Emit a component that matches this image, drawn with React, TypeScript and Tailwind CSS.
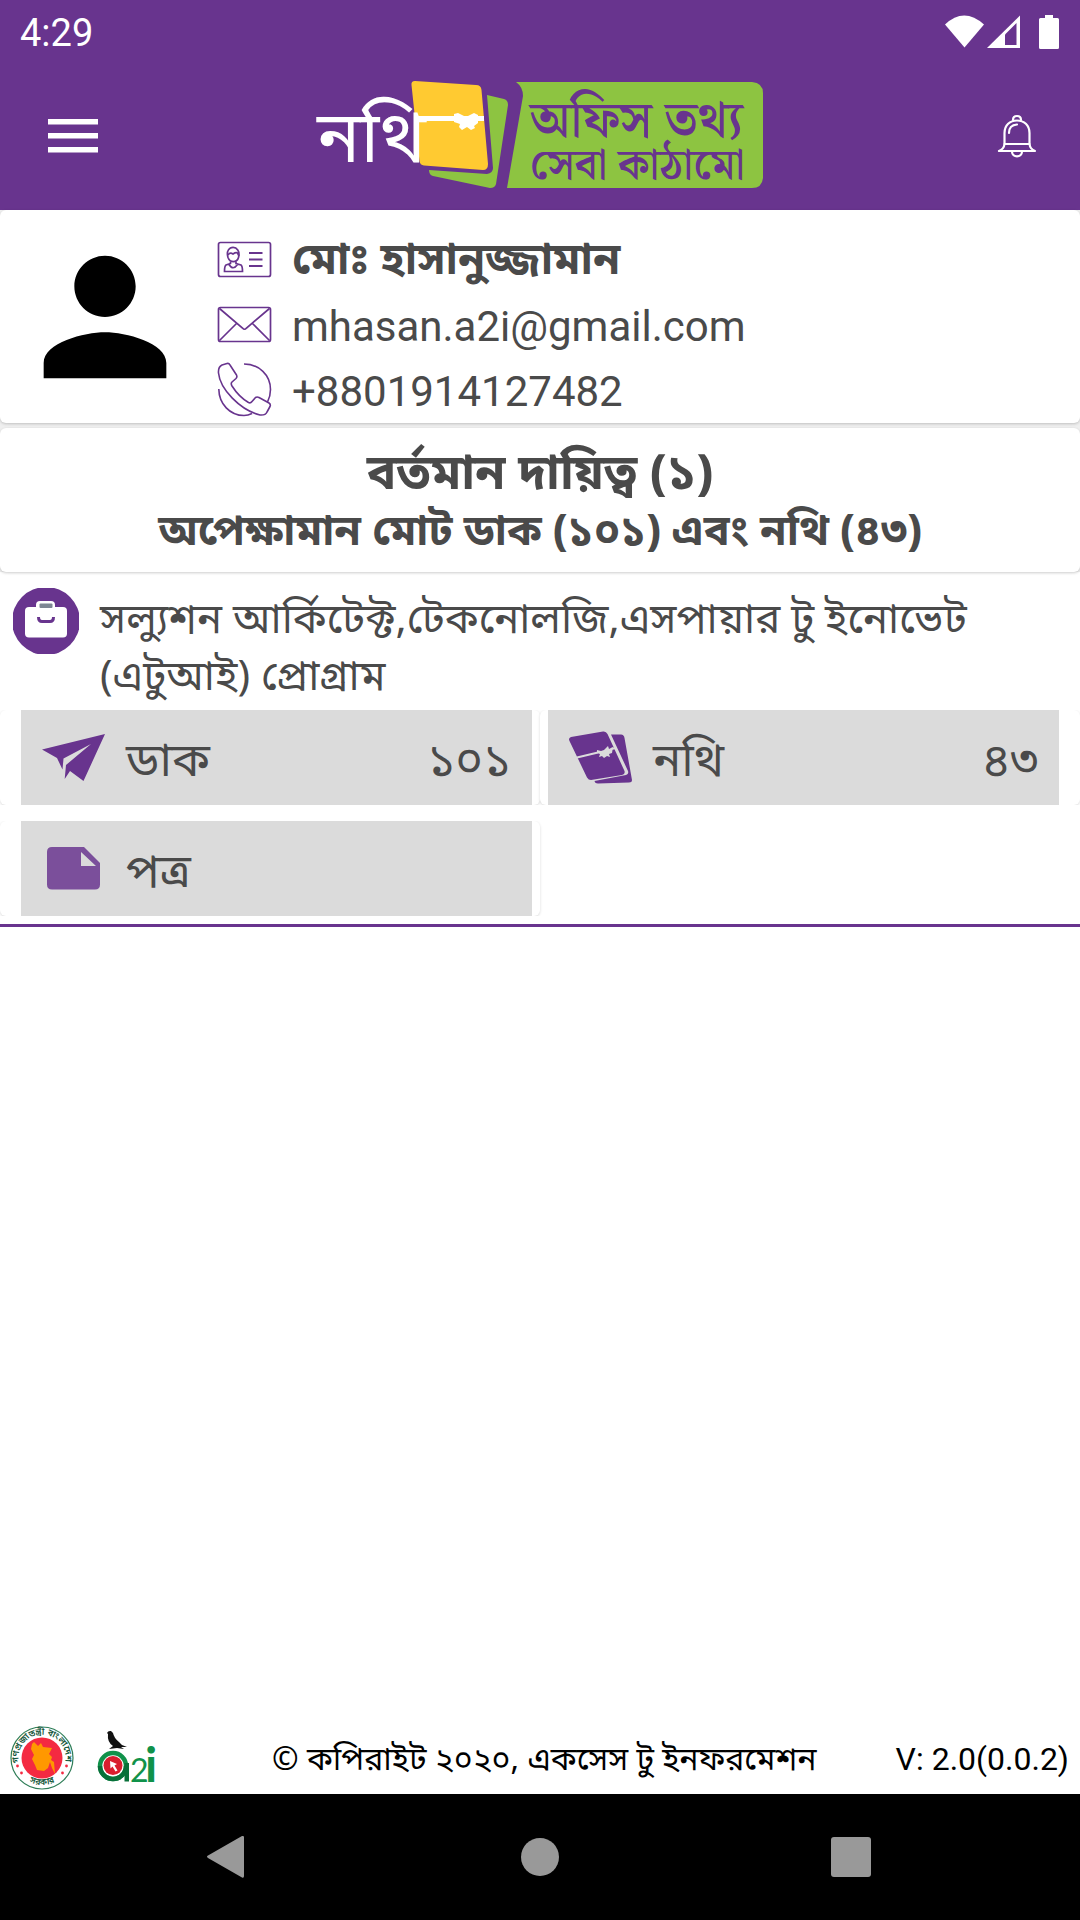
import type { ReactNode } from 'react'

function StatusBar() {
  return (
    <div className="flex h-16 items-center justify-between px-5 text-white">
      <span className="pt-[2px] font-['Roboto'] text-[38px] leading-[42px]">4:29</span>
      <svg viewBox="945 12 115 38" className="h-[38px] w-[115px]" fill="#fff" aria-hidden="true">
        <path d="M945 23.500Q964 5.500 984 23.500L964.500 46.500Z" />
        <path d="M987 47L1020 14.500V47Z" />
        <path d="M1005 33.500L1016.500 22V44H1005Z" fill="#68348e" />
        <path d="M1045 14h8v3h4.500q1.500 0 1.500 1.500v28q0 1.500-1.500 1.500h-17q-1.500 0-1.500-1.500v-28q0-1.500 1.500-1.500h4.500z" />
      </svg>
    </div>
  )
}

function NothiLogo() {
  return (
    <svg viewBox="317 81 446 108" className="h-[108px] w-[446px] overflow-visible" role="img" aria-label="নথি">
      <path d="M487 95L504 99Q508 100 508 105L496 184Q495 188 490 188L433 176Q429 175 429 170L487 174Q493 173 493 168Z" fill="#8dc441" />
      <path d="M411.500 85Q411 81 415 81L476 85Q481 85 481.500 90L488 164Q488 170 483 170L424 165.500Q420 165 419.500 161Z" fill="#ffca31" />
      <path d="M516 82H752Q763 83 763 93V178Q762 188 752 188H507L523 96Q523 87 516 82Z" fill="#8dc441" />
      <g fill="#fff" className="font-['Noto_Sans_Bengali','Noto_Sans',sans-serif]">
        <text x="317" y="162" fontSize="72">নথি</text>
        <rect x="414" y="116" width="70" height="5" />
        <path d="M454 114l4-1 8 4 8-4 4 2v8l-4 3 1 2-4 2-4-3-5 3-3-3 1-3-6-2z" />
      </g>
      <g fill="#68348e" fontWeight="600" className="font-['Noto_Serif_Bengali','Noto_Sans_Bengali','Noto_Sans',serif]">
        <text x="530" y="137" fontSize="51">অফিস তথ্য</text>
        <text x="530" y="179" fontSize="43">সেবা কাঠামো</text>
      </g>
    </svg>
  )
}

function Header() {
  return (
    <header className="bg-[#68348e]">
      <StatusBar />
      <div className="grid h-[146px] grid-cols-[1fr_auto_1fr] items-start pt-[17px]">
        <button aria-label="মেনু" className="ml-12 mt-[36px] w-[50px] justify-self-start">
          <svg viewBox="0 0 50 38" className="h-[38px] w-[50px]" fill="#fff">
            <rect y="2" width="50" height="5.500" />
            <rect y="16" width="50" height="5.500" />
            <rect y="30" width="50" height="5.500" />
          </svg>
        </button>
        <NothiLogo />
        <button aria-label="বিজ্ঞপ্তি" className="mr-[43px] mt-[33px] justify-self-end">
          <svg viewBox="997 114 40 44" className="h-[44px] w-[40px]" fill="none" stroke="#fff" strokeWidth="2.200" strokeLinejoin="round" strokeLinecap="round">
            <path d="M1013 120Q1013 116 1017 116T1021 120" />
            <path d="M1004.500 144V133C1004.500 125 1010 120.500 1017 120.500S1029.500 125 1029.500 133V144Z" />
            <path d="M1004.500 144Q1004 149 999 151H1035Q1030 149 1029.500 144" />
            <path d="M1012 151.500C1012 158 1022 158 1022 151.500" />
            <path d="M1009 133Q1009 125 1017 124.500" />
          </svg>
        </button>
      </div>
    </header>
  )
}

function IdCardIcon() {
  return (
    <svg viewBox="217 241 55 37" className="h-[37px] w-[55px]" fill="none" stroke="#68348e" strokeWidth="1.700" aria-hidden="true">
      <rect x="218.500" y="242.500" width="52" height="34" rx="2" />
      <path d="M249 253h13.500M249 259.500h13.500M249 266h13.500" strokeWidth="1.800" />
      <path d="M228 257.500C224 244 242 244 238.500 257.500C237 263 230 263 228 257.500Z" />
      <path d="M228 255Q230 252 233 254Q236 252 237.500 253L239 256" />
      <path d="M230.500 261.500V263.500L226 265Q224.500 266 224.500 271.500H242.500Q242.500 266 241 265L236 263.500V261.500M229 264.500Q233 271 237.500 264.500" />
    </svg>
  )
}

function MailIcon() {
  return (
    <svg viewBox="217 306 55 37" className="h-[37px] w-[55px]" fill="none" stroke="#68348e" strokeWidth="1.700" aria-hidden="true">
      <rect x="218.500" y="307.500" width="52" height="34" rx="2" />
      <path d="M219.500 308.500L242.500 328Q244.500 330.500 246.500 328L269.500 308.500M219.500 340.500L236.500 323.500M269.500 340.500L252.500 323.500" />
    </svg>
  )
}

function PhoneIcon() {
  return (
    <svg viewBox="217 362 55 55" className="h-[55px] w-[55px]" fill="none" stroke="#68348e" strokeWidth="1.600" strokeLinejoin="round" aria-hidden="true">
      <path d="M222 365L227 363.500Q229 363 230 365L236.500 375Q237.500 377 236 378.500L232 382Q230.500 383.500 232 386Q239 397 248.500 402.500Q250.500 403.500 252 401.500L255.500 397.500Q257 396.500 259 397.500L269 403Q271 404.500 270 406.500L267 412Q265.500 415.500 260 415C240 410 220 389 218.500 373Q218 367 222 365Z" />
      <path d="M244 364C259 364 270.500 375 270.500 389.500Q270.500 396 267.500 402" />
      <path d="M218.800 389C219 404 230 415.500 244 415.500Q248 415.500 252 413.500" />
    </svg>
  )
}

function ContactLine({ icon, children }: { icon: ReactNode; children: ReactNode }) {
  return (
    <li className="flex h-[65px] items-center gap-5">
      <span className="flex w-[55px] justify-center">{icon}</span>
      {children}
    </li>
  )
}

function ProfileCard() {
  return (
    <section className="flex rounded-[6px] bg-white pb-[1px] pt-[15px] shadow-[0_1px_3px_rgba(0,0,0,0.2)]">
      <svg viewBox="0 0 24 24" className="ml-[13px] size-[184px]" aria-hidden="true">
        <path d="M12 12c2.210 0 4-1.790 4-4s-1.790-4-4-4-4 1.790-4 4 1.790 4 4 4zm0 2c-2.670 0-8 1.340-8 4v2h16v-2c0-2.660-5.330-4-8-4z" />
      </svg>
      <ul className="ml-5 pt-[2px] text-[42px] leading-[57px]">
        <ContactLine icon={<IdCardIcon />}>
          <span className="pt-2 font-['Noto_Sans_Bengali','Roboto',sans-serif] text-[44px] font-bold">মোঃ হাসানুজ্জামান</span>
        </ContactLine>
        <ContactLine icon={<MailIcon />}>
          <a href="mailto:mhasan.a2i@gmail.com" className="pt-1">mhasan.a2i@gmail.com</a>
        </ContactLine>
        <ContactLine icon={<PhoneIcon />}>
          <a href="tel:+8801914127482" className="pt-1">+8801914127482</a>
        </ContactLine>
      </ul>
    </section>
  )
}

function SummaryCard() {
  return (
    <section className="mt-[5px] rounded-[6px] bg-white pb-2 pt-5 text-center font-['Noto_Sans_Bengali','Roboto',sans-serif] font-bold shadow-[0_1px_3px_rgba(0,0,0,0.2)]">
      <h1 className="text-[49px] leading-[58px]">বর্তমান দায়িত্ব (১)</h1>
      <h2 className="text-[43px] leading-[58px]">অপেক্ষামান মোট ডাক (১০১) এবং নথি (৪৩)</h2>
    </section>
  )
}

function BriefcaseIcon() {
  return (
    <svg viewBox="13 588 66 66" className="size-[66px] shrink-0" aria-hidden="true">
      <circle cx="46" cy="621" r="34" fill="#68348e" />
      <rect x="36" y="601" width="19" height="12" rx="4" fill="#fff" />
      <rect x="25" y="607" width="42" height="30.500" rx="4" fill="#fff" />
      <rect x="39.500" y="603.500" width="13" height="4.500" rx="1" fill="#7d8793" />
      <path d="M38.500 617Q38.500 621.500 42 621.500H50Q53.500 621.500 53.500 617" fill="none" stroke="#68348e" strokeWidth="3" />
    </svg>
  )
}

function PlaneIcon() {
  return (
    <svg viewBox="42 726 63 63" className="size-[63px]" fill="#68348e" aria-hidden="true">
      <path d="M42 749.500L105 734L83.500 781L70 771L64.700 779L66 765L91 744L63.500 758.500L62.500 769.500L57 758Z" />
    </svg>
  )
}

function FolderIcon() {
  return (
    <svg viewBox="569 726 63 63" className="size-[63px]" fill="#68348e" aria-hidden="true">
      <path d="M611 734.500H621Q624 734.500 624.500 738L632 780Q632 782.500 629 782.500L598 783.500Q595 783.500 594.500 781L626 775Q629 774 628 771Z" />
      <path d="M571 737L603 731.500Q606 731 607.500 734L624.500 771Q625.500 774 622 775L591 780Q588.500 780 587 777.500L569.500 741Q568 738 571 737Z" />
      <path d="M577 757.500L598 752.500M611 749L616 748" stroke="#dbdbdb" strokeWidth="2" />
      <path d="M597 750l4 1 3-1 4-4 1 3 4-2-1 6-3 1 1 3-3-1-3 2-2-2-3 1 1-3-3-1z" fill="#dbdbdb" />
    </svg>
  )
}

function NoteIcon() {
  return (
    <svg viewBox="42 837 63 63" className="size-[63px]" fill="#7b4f9b" aria-hidden="true">
      <path fillRule="evenodd" d="M52 847H84L100 863V884.500Q100 889.500 95 889.500H52Q47 889.500 47 884.500V852Q47 847 52 847ZM81 852V866H96Z" />
    </svg>
  )
}

interface TileProps {
  icon: ReactNode
  label: string
  count?: string
  side: 'left' | 'right'
}

function Tile({ icon, label, count, side }: TileProps) {
  return (
    <div className={`rounded-[6px] bg-white shadow-[0_1px_3px_rgba(0,0,0,0.15)] ${side === 'left' ? 'pl-[21px] pr-2' : 'pl-2 pr-[21px]'}`}>
      <button className="flex h-[95px] w-full items-center gap-[21px] bg-[#dbdbdb] px-[21px] font-['Noto_Sans_Bengali','Roboto',sans-serif] text-[47px] leading-[64px]">
        {icon}
        <span className="pt-3">{label}</span>
        {count && <span className="ml-auto pt-3">{count}</span>}
      </button>
    </div>
  )
}

function OfficeSection() {
  return (
    <section className="mt-4 border-b-[3px] border-[#68348e] pb-2">
      <div className="flex gap-[21px] pl-[13px] pr-16">
        <BriefcaseIcon />
        <p className="pb-[2px] pt-[6px] font-['Noto_Sans_Bengali','Roboto',sans-serif] text-[42px] leading-[57px]">সল্যুশন আর্কিটেক্ট,টেকনোলজি,এসপায়ার টু ইনোভেট (এটুআই) প্রোগ্রাম</p>
      </div>
      <div className="space-y-4">
        <div className="grid grid-cols-2 overflow-hidden">
          <Tile icon={<PlaneIcon />} label="ডাক" count="১০১" side="left" />
          <Tile icon={<FolderIcon />} label="নথি" count="৪৩" side="right" />
        </div>
        <div className="grid grid-cols-2 overflow-hidden">
          <Tile icon={<NoteIcon />} label="পত্র" side="left" />
        </div>
      </div>
    </section>
  )
}

function GovSeal() {
  return (
    <svg viewBox="0 0 64 64" className="size-16" role="img" aria-label="গণপ্রজাতন্ত্রী বাংলাদেশ সরকার">
      <defs>
        <path id="seal-top" d="M9 37A23.500 23.500 0 1 1 55 37" />
        <path id="seal-bottom" d="M14 53Q32 65 50 53" />
      </defs>
      <circle cx="32" cy="32" r="31" fill="#fff" stroke="#2e7d57" strokeWidth="1.200" />
      <circle cx="32" cy="32" r="20.500" fill="#f42a41" />
      <path d="M22 18l2-2 4 4 3-3 2 4 9 1-3 6 3 3-1 3 3 2 1 12-3-6-2-6-2 6-4 3-7-1-2-5-3-6 2-4-3-6z" fill="#ff9800" />
      <g fill="#14573a" fontSize="9" fontWeight="600" className="font-['Noto_Sans_Bengali','Noto_Sans',sans-serif]">
        <text><textPath href="#seal-top">গণপ্রজাতন্ত্রী বাংলাদেশ</textPath></text>
        <text textAnchor="middle"><textPath href="#seal-bottom" startOffset="50%">সরকার</textPath></text>
      </g>
      <g fill="#f42a41">
        <circle cx="7.500" cy="40" r="1.400" />
        <circle cx="11.500" cy="47" r="1.400" />
        <circle cx="56.500" cy="40" r="1.400" />
        <circle cx="52.500" cy="47" r="1.400" />
      </g>
    </svg>
  )
}

function A2iLogo() {
  return (
    <svg viewBox="97 1731 60 56" className="h-14 w-[60px] overflow-visible" role="img" aria-label="a2i">
      <path d="M107 1734Q108 1731.500 111 1732L113 1734Q114 1739 119 1743L122 1746L127 1748L121 1748L124 1750L117 1749L109 1750L113 1747Q107 1743 108 1735Z" fill="#111" />
      <circle cx="113" cy="1767" r="13" fill="#fff" stroke="#10924a" strokeWidth="4.500" />
      <path d="M100 1767A13 13 0 0 0 126 1767" fill="none" stroke="#087039" strokeWidth="4.500" />
      <rect x="124.500" y="1764" width="4.500" height="18.500" fill="#087039" />
      <circle cx="113" cy="1766.500" r="9.500" fill="#d91e2e" />
      <path d="M110 1762l7 3-2.500 1.500 3 5-2 1-3-5-2 2z" fill="#fff" />
      <text y="1782.500" fill="#10924a" className="font-['Lato']">
        <tspan x="130" fontSize="32">2</tspan>
        <tspan x="145" fontSize="48" fontWeight="700">i</tspan>
      </text>
    </svg>
  )
}

function Footer() {
  return (
    <footer className="flex items-center justify-between pb-1 pl-[10px] pr-[11px] text-[32px] leading-[44px] text-black">
      <div className="flex items-center gap-[23px]">
        <GovSeal />
        <A2iLogo />
      </div>
      <p className="ml-9 pt-2 font-['Noto_Sans_Bengali','Roboto',sans-serif]">© কপিরাইট ২০২০, একসেস টু ইনফরমেশন</p>
      <span className="pt-[2px]">V: 2.0(0.0.2)</span>
    </footer>
  )
}

function NavBar() {
  return (
    <nav className="grid h-[126px] grid-cols-[1fr_auto_1fr] items-center bg-black px-[205px]">
      <button aria-label="ফিরে যান" className="justify-self-start">
        <svg viewBox="0 0 40 44" className="h-11 w-10" fill="#999">
          <path d="M3 20.500L37 1Q39 0.500 39 2V41Q39 43.500 37 42.500L3 23Q1 21.500 3 20.500Z" />
        </svg>
      </button>
      <button aria-label="হোম" className="size-[38px] rounded-full bg-[#999]" />
      <button aria-label="সাম্প্রতিক" className="mr-1 size-10 justify-self-end rounded-[3px] bg-[#999]" />
    </nav>
  )
}

export default function App() {
  return (
    <div className="flex min-h-screen flex-col bg-white font-['Roboto','Noto_Sans_Bengali','Noto_Sans',sans-serif] text-[#4a4a4a]">
      <Header />
      <main className="flex-1">
        <div className="bg-[#efefef]">
          <ProfileCard />
          <SummaryCard />
        </div>
        <OfficeSection />
      </main>
      <Footer />
      <NavBar />
    </div>
  )
}
